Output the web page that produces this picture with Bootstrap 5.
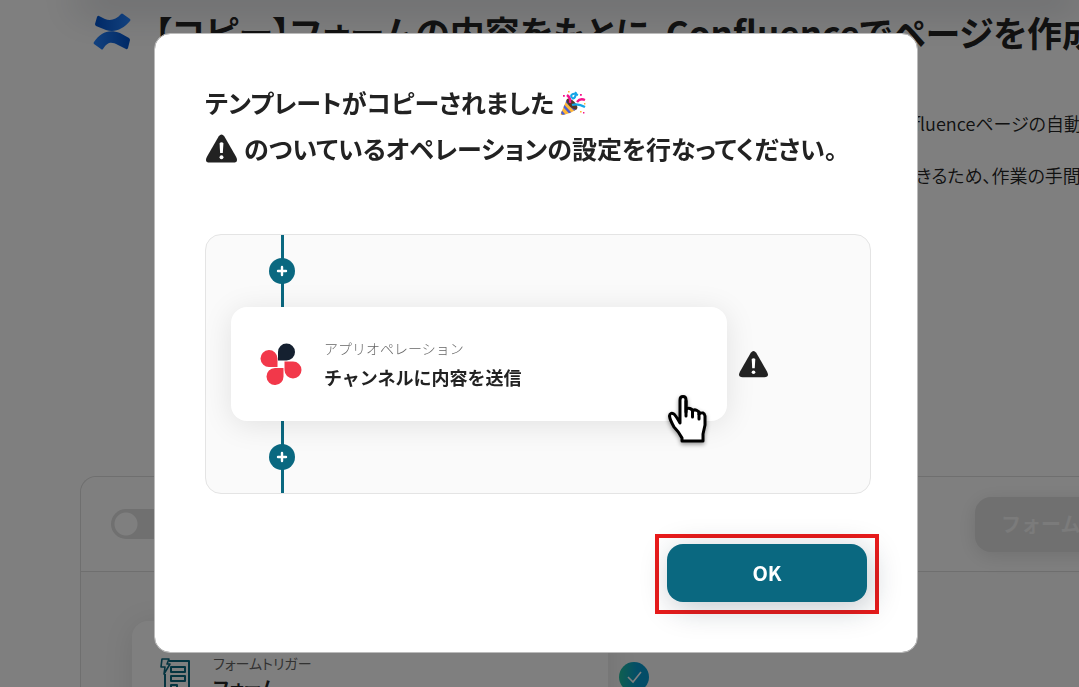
<!DOCTYPE html>
<html lang="ja">
<head>
<meta charset="utf-8">
<meta name="viewport" content="width=device-width, initial-scale=1">
<title>テンプレート</title>
<link rel="stylesheet" href="https://cdn.jsdelivr.net/npm/bootstrap@5.3.0/dist/css/bootstrap.min.css">
<style>
body{font-family:"Noto Sans CJK JP",sans-serif;font-feature-settings:"palt";color:#222;background:#fff;height:100vh;overflow:hidden}
.topbar{height:1px;margin:-1px 4px 0 84px;box-shadow:0 0 40px 8px rgba(20,30,50,.3)}
.page-area{padding-left:80px}
.page-title{font-size:35px;font-weight:700;line-height:48px;padding:8px 0 0 12px;gap:22px}
.intro{font-size:18px;font-weight:350;line-height:52px;margin-top:41px;padding-left:calc(78% + 22px)}
.flow{margin-top:275px;border:1px solid #dedede;border-right:0;border-radius:16px 0 0 0;background:#fafafa}
.flow-head{height:95px;padding-left:30px;border-bottom:1px solid #dedede;background:#fff;border-radius:16px 0 0 0}
.form-check-input.flow-switch{width:60px;height:30px;margin:0;border:0;opacity:1;background-color:#e0e0e0;background-image:radial-gradient(circle at 15px 15px,#fff 11px,transparent 12px)}
.btn.btn-form{width:130px;height:55px;margin-right:-26px;border:0;border-radius:16px;background:#e0e0e0;color:#f6f6f6;font-size:20px;font-weight:700;padding-left:26px;opacity:1;text-align:left;white-space:nowrap;overflow:hidden;box-shadow:0 4px 20px rgba(0,0,0,.12)}
.flow-body{padding:49px 0 0 51px}
.trigger{width:476px;height:114px;border-radius:16px;background:#fff;padding:32px 28px;gap:22px;box-shadow:0 4px 30px rgba(0,0,0,.1)}
.op-label{font-size:14px;line-height:20px;color:#666}
.op-title{font-size:18px;line-height:28px;font-weight:700;color:#222}
.operation .op-label{font-weight:300;font-feature-settings:normal}
.operation .op-title{font-feature-settings:normal;margin-top:5px}
.status{margin:41px 0 0 11px}
.modal-backdrop.veil{opacity:.5}
.modal.copied{padding-right:7px}
.modal.copied .modal-dialog{max-width:764px;margin-top:33px;margin-bottom:0}
.copied .modal-content{border-color:#bbb;border-radius:16px;padding:45px 38px 38px 50px}
.copied-title{font-size:25px;line-height:46px;font-weight:700;margin:0 0 63px}
.copied-title span{gap:6px}
.copied-title svg{margin-top:2px}
.preview{margin-right:8px;border:1px solid #e4e4e4;border-radius:16px;background:#fafafa;padding:0 143px 0 25px}
.link-line{height:72px;width:26px;margin-left:38px;background:linear-gradient(#0a6880,#0a6880) center/3px 100% no-repeat}
.plus{width:26px;height:26px;border-radius:50%;background:#0a6880}
.operation{height:114px;border-radius:16px;background:#fff;padding:0 29px;gap:22px;box-shadow:0 4px 30px rgba(0,0,0,.1)}
.op-alert{left:calc(100% + 11px);top:43px}
.pointer{right:18px;top:85px;filter:drop-shadow(0 2px 2px rgba(0,0,0,.4))}
.focus-box{margin-top:40px;border:4px solid #e91b1b;padding:6px 8px 8px}
.btn.btn-ok{width:200px;height:58px;border:0;border-radius:16px;background:#0a6880;color:#fff;font-size:20px;font-weight:700;box-shadow:4px 6px 30px rgba(20,40,60,.25)}
</style>
</head>
<body>
<div class="topbar"></div>
<main class="page-area">
  <h1 class="page-title d-flex align-items-center text-nowrap m-0">
    <svg width="40" height="40" viewBox="0 0 40 40" class="flex-shrink-0" aria-hidden="true">
      <defs>
        <linearGradient id="ca" x1="0" x2="1"><stop offset="0" stop-color="#0052cc"/><stop offset="1" stop-color="#2684ff"/></linearGradient>
        <linearGradient id="cb" x1="1" x2="0"><stop offset="0" stop-color="#0052cc"/><stop offset="1" stop-color="#2684ff"/></linearGradient>
      </defs>
      <path fill="url(#ca)" d="M7 4Q6 3 5 5L3 12Q3 13 4 14L14 18C23 21 31 17 38 9Q39 8 38 7L31 2Q30 1 29 2C24 8 18 9 13 7Z"/>
      <path fill="url(#cb)" d="M34 37Q35 38 36 36L38 28Q38 27 37 26L28 21C17 17 9 20 2 30Q1 31 2 32L9 37Q10 38 11 37C16 29 20 30 26 33Z"/>
    </svg>
    <span>【コピー】フォームの内容をもとに、Confluenceでページを作成</span>
  </h1>
  <div class="intro text-nowrap">Confluenceページの自動<br>成できるため、作業の手間</div>
  <section class="flow">
    <div class="flow-head d-flex align-items-center justify-content-between">
      <div class="form-check form-switch m-0 p-0"><input class="form-check-input flow-switch m-0" type="checkbox" role="switch" aria-label="有効化"></div>
      <button class="btn btn-form" type="button" disabled>フォーム</button>
    </div>
    <div class="flow-body d-flex align-items-start">
      <div class="trigger d-flex">
        <svg width="31" height="40" viewBox="0 0 31 40" class="flex-shrink-0 mt-1" fill="none" stroke="#0a6880" stroke-width="2" stroke-linejoin="round" aria-hidden="true">
          <path d="M9 4H29V38H5V17"/><path d="M2 2H9L7 7H10L4 17L5 10H1Z" stroke-width="1.6"/><path d="M11 10H25V15H11ZM11 19H25V24H11ZM11 28H17V32H11Z"/>
        </svg>
        <div><div class="op-label">フォームトリガー</div><div class="op-title">フォーム</div></div>
      </div>
      <svg class="status" width="30" height="30" viewBox="0 0 30 30" aria-hidden="true">
        <defs><linearGradient id="st"><stop offset="0" stop-color="#20bfa0"/><stop offset=".6" stop-color="#089bcf"/></linearGradient></defs>
        <circle cx="15" cy="15" r="15" fill="url(#st)"/><path d="M9 15L14 20L22 10" fill="none" stroke="#fff" stroke-width="1.6"/>
      </svg>
    </div>
  </section>
</main>

<div class="modal-backdrop veil"></div>
<div class="modal copied d-block" role="dialog" aria-labelledby="copiedTitle">
  <div class="modal-dialog">
    <div class="modal-content">
      <h2 class="copied-title" id="copiedTitle">
        <span class="d-flex align-items-center">テンプレートがコピーされました
          <svg width="26" height="26" viewBox="0 0 26 26" aria-hidden="true">
            <defs><clipPath id="cone"><path d="M7 9Q14 14 17 19Q10 24 2 25Q0 25 1 23Z"/></clipPath></defs>
            <path d="M7 9Q14 14 17 19Q10 24 2 25Q0 25 1 23Z" fill="#ffb636"/>
            <path d="M5 10L18 23M1 13L13 26M-1 19L6 27" clip-path="url(#cone)" stroke="#4b5fd3" stroke-width="2.4"/>
            <ellipse cx="12" cy="14" rx="3.2" ry="7" transform="rotate(-45 12 14)" fill="#543628"/>
            <path d="M10 13Q11 8 7 5M17 12Q20 8 25 10" fill="none" stroke="#f5128b" stroke-width="2.4"/>
            <path d="M12 15Q18 13 25 17M16 2Q15 4 18 5M12 8Q10 5 13 4Q17 3 15 7Q14 9 12 8" fill="none" stroke="#16a6e8" stroke-width="2.2"/>
            <path d="M8 1h1.6v1.6H8zM20 21h1.6v1.6H20zM24 13h1.4v1.4H24z" fill="#ffb636"/><path d="M3 5h1.8v1.8H3zM20 4h1.8v1.8H20zM23 22h1.4v1.4H23z" fill="#f5128b"/>
          </svg>
        </span>
        <span class="d-flex align-items-center text-nowrap">
          <svg class="flex-shrink-0" width="33" height="32" viewBox="0 0 34 32" aria-hidden="true"><use href="#warn"/></svg>
          <span>のついているオペレーションの設定を行なってください。</span>
        </span>
      </h2>
      <div class="preview">
        <div class="link-line d-flex align-items-center"><span class="plus d-flex align-items-center justify-content-center"><svg width="12" height="12" viewBox="0 0 12 12" aria-hidden="true"><path d="M6 2V10M2 6H10" stroke="#fff" stroke-width="2.400" stroke-linecap="round"/></svg></span></div>
        <div class="position-relative">
          <div class="operation d-flex align-items-center">
            <svg width="42" height="42" viewBox="0 0 42 42" class="flex-shrink-0" aria-hidden="true">
              <path fill="#152030" d="M18 17.500V9A8.500 8.500 0 1 1 26.500 17.500Z"/>
              <path fill="#f2384a" d="M17.500 24H9.500A8.500 8.500 0 1 1 17.500 15.500ZM24.500 18.500H33A8.500 8.500 0 1 1 24.500 27ZM23.500 25V33A8.500 8.500 0 1 1 15 25Z"/>
            </svg>
            <div><div class="op-label">アプリオペレーション</div><div class="op-title">チャンネルに内容を送信</div></div>
          </div>
          <svg class="op-alert position-absolute" width="31" height="29" viewBox="0 0 34 32" aria-hidden="true">
            <g id="warn"><path fill="#222" d="M14 3Q17 -1 20 3L32 24Q35 30 29 30H5Q-1 30 2 24Z"/><path fill="#fff" d="M15 10Q17 8 19 10L18.400 20H15.600Z"/><circle cx="17" cy="24.500" r="2" fill="#fff"/></g>
          </svg>
          <svg class="pointer position-absolute" width="42" height="52" viewBox="0 0 42 52" aria-hidden="true">
            <path d="M13 31V8Q13 4.500 16 4.500T19 8V20V18Q20 15.500 23 16.500T25.500 20V19Q27 17 30 18.500T32 22Q37 19 38 24V33L36 42V49H15V46Q12 40 7 35Q3 28 2.500 24Q3 20 7 22Q9 24 13 31Z" fill="#fff" stroke="#000" stroke-width="3" stroke-linejoin="round"/>
            <path d="M19 9V24M25.500 18V25M32 20V27" stroke="#000" stroke-width="3" stroke-linecap="round"/>
          </svg>
        </div>
        <div class="link-line d-flex align-items-center"><span class="plus d-flex align-items-center justify-content-center"><svg width="12" height="12" viewBox="0 0 12 12" aria-hidden="true"><path d="M6 2V10M2 6H10" stroke="#fff" stroke-width="2.400" stroke-linecap="round"/></svg></span></div>
      </div>
      <div class="focus-box align-self-end"><button class="btn btn-ok" type="button">OK</button></div>
    </div>
  </div>
</div>
<script src="https://cdn.jsdelivr.net/npm/bootstrap@5.3.0/dist/js/bootstrap.bundle.min.js"></script>
</body>
</html>
